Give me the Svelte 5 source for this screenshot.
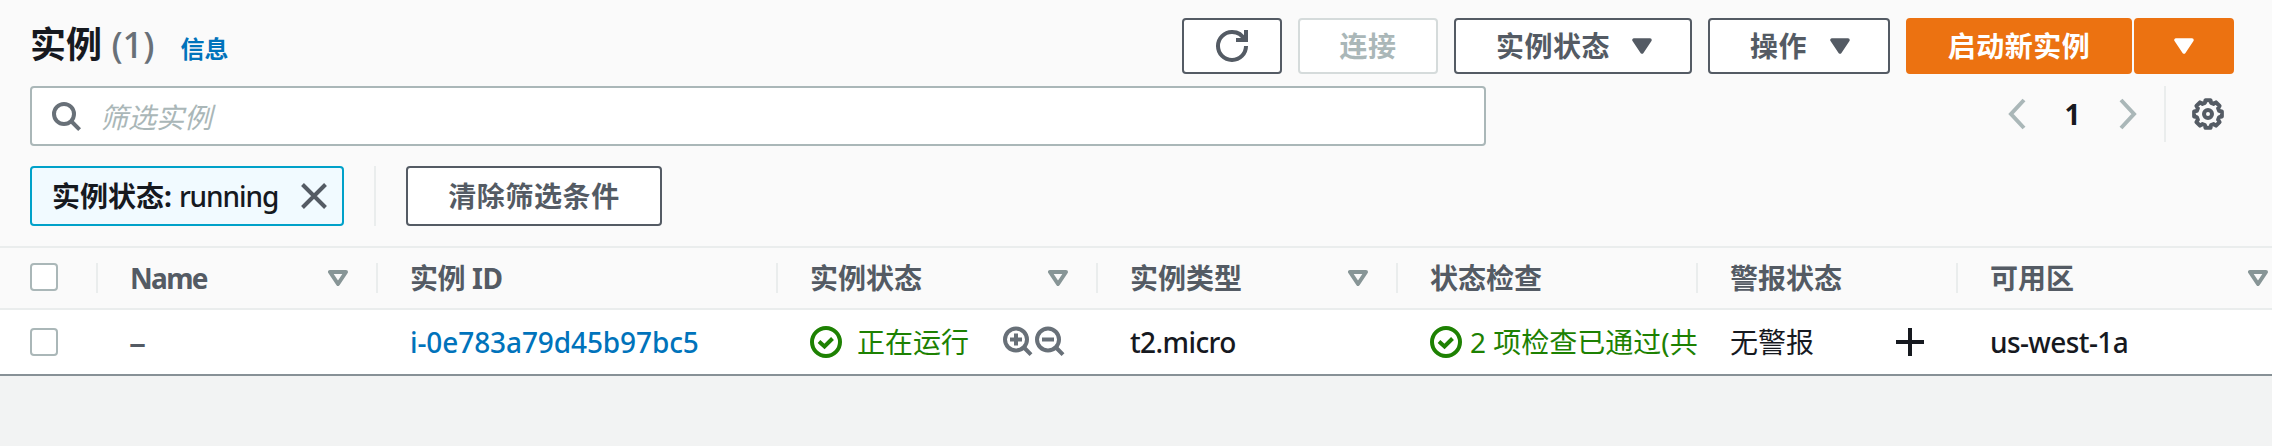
<script>
  const columns = [
    { label: 'Name', sortable: true },
    { label: '实例 ID', sortable: false },
    { label: '实例状态', sortable: true },
    { label: '实例类型', sortable: true },
    { label: '状态检查', sortable: false },
    { label: '警报状态', sortable: false },
    { label: '可用区', sortable: true }
  ];

  const points = [];
  for (let i = 0; i < 8; i++) {
    const mid = (i * 45 - 90) * Math.PI / 180;
    for (const [offset, r] of [[-0.27, 11.6], [-0.18, 14.1], [0.18, 14.1], [0.27, 11.6]]) {
      points.push(`${(16 + r * Math.cos(mid + offset)).toFixed(2)},${(16 + r * Math.sin(mid + offset)).toFixed(2)}`);
    }
  }
  const gear = points.join(' ');
</script>

{#snippet caret()}
  <svg class="caret" width="20" height="16" viewBox="0 0 20 16"><path d="M2 2H18L10 14Z" fill="currentColor" stroke="currentColor" stroke-width="3.5" stroke-linejoin="round" /></svg>
{/snippet}

{#snippet ok()}
  <svg class="icon" width="32" height="32" viewBox="0 0 32 32"><circle cx="16" cy="16" r="14" /><path d="M9 15.5L14.5 20.5L22.5 12.5" /></svg>
{/snippet}

<section class="panel">
  <header class="top">
    <h2>实例 <span class="count">(1)</span></h2>
    <a class="info" href="#info">信息</a>
    <div class="actions">
      <button class="btn refresh" aria-label="刷新">
        <svg class="icon" width="32" height="32" viewBox="0 0 16 16"><g stroke-width="2"><path d="M10 5h5V0" /><path d="M15 8a6.957 6.957 0 0 1-7 7 6.957 6.957 0 0 1-7-7 6.957 6.957 0 0 1 7-7 6.87 6.87 0 0 1 6.3 4" /></g></svg>
      </button>
      <button class="btn connect" disabled>连接</button>
      <button class="btn menu"><span>实例状态</span>{@render caret()}</button>
      <button class="btn menu"><span>操作</span>{@render caret()}</button>
      <div class="split">
        <button class="btn primary launch">启动新实例</button>
        <button class="btn primary more" aria-label="更多">{@render caret()}</button>
      </div>
    </div>
  </header>

  <div class="tools">
    <label class="search">
      <svg class="icon" width="32" height="32" viewBox="0 0 32 32"><circle cx="14" cy="14" r="10" /><path d="M21 21L29.6 29.6" /></svg>
      <input placeholder="筛选实例" />
    </label>
    <nav class="pages">
      <svg class="icon arrow" width="20" height="32" viewBox="0 0 20 32"><path d="M17 2L4 16L17 30" /></svg>
      <b>1</b>
      <svg class="icon arrow" width="20" height="32" viewBox="0 0 20 32"><path d="M3 2L16 16L3 30" /></svg>
      <span class="rule"></span>
      <svg class="icon gear" width="32" height="32" viewBox="0 0 32 32"><polygon points={gear} stroke-linejoin="round" /><circle cx="16" cy="16" r="4" /></svg>
    </nav>
  </div>

  <div class="filters">
    <div class="token">
      <b>实例状态:</b><span>running</span>
      <svg class="icon" width="28" height="28" viewBox="0 0 28 28"><path d="M2.5 2.5L25.5 25.5M25.5 2.5L2.5 25.5" /></svg>
    </div>
    <span class="rule"></span>
    <button class="btn clear">清除筛选条件</button>
  </div>

  <div class="row head">
    <div class="select"><span class="check"></span></div>
    {#each columns as col, i}
      <div class="cell" class:latin={i === 0} class:mixed={i === 1}>
        <span>{col.label}</span>
        {#if col.sortable}
          <svg class="sort" width="20" height="16" viewBox="0 0 20 16"><path d="M2 2H18L10 14Z" /></svg>
        {/if}
      </div>
    {/each}
  </div>

  <div class="row body">
    <div class="select"><span class="check"></span></div>
    <div class="cell dash">–</div>
    <div class="cell id"><a href="#instance">i-0e783a79d45b97bc5</a></div>
    <div class="cell good">
      {@render ok()}<span class="state">正在运行</span>
      <span class="lenses">
        <svg class="icon" width="32" height="32" viewBox="0 0 32 32"><circle cx="15" cy="13.5" r="11" /><path d="M15 7.5V19.5M9 13.5H21M23 21.5L30 28.7" /></svg>
        <svg class="icon" width="32" height="32" viewBox="0 0 32 32"><circle cx="15" cy="13.5" r="11" /><path d="M9 13.5H21M23 21.5L30 28.7" /></svg>
      </span>
    </div>
    <div class="cell value">t2.micro</div>
    <div class="cell good clip">{@render ok()}<span class="passed">2 项检查已通过(共</span></div>
    <div class="cell">无警报
      <svg class="icon plus" width="28" height="28" viewBox="0 0 28 28"><path d="M14 0V28M0 14H28" /></svg>
    </div>
    <div class="cell value">us-west-1a</div>
  </div>
</section>

<style>
  :global(body) {
    background: #f2f3f3;
  }
  .panel {
    width: 2272px;
    height: 374px;
    background: #fafafa;
    border-bottom: 2px solid #879196;
    box-shadow: 0 1px 0 0 #b4bcbe, 0 2px 0 0 #d8dddd;
    color: #16191f;
    font: 28px/40px "Noto Sans", "Noto Sans CJK SC", sans-serif;
    white-space: nowrap;
  }
  button, input {
    font: inherit;
    padding: 0;
    margin: 0;
  }
  a {
    color: #0073bb;
    text-decoration: none;
  }
  svg {
    display: block;
    flex: none;
  }
  .icon {
    fill: none;
    stroke: currentColor;
    stroke-width: 4;
  }
  .top {
    height: 86px;
    box-sizing: border-box;
    padding: 18px 38px 0 30px;
    display: flex;
    align-items: flex-start;
  }
  h2 {
    margin: 5px 0 0;
    font-size: 36px;
    line-height: 44px;
  }
  .count {
    font-weight: 500;
    color: #687078;
  }
  .info {
    margin: 11px 0 0 26px;
    font-size: 24px;
    font-weight: 700;
  }
  .actions {
    margin-left: auto;
    display: flex;
    gap: 16px;
  }
  .btn {
    height: 56px;
    box-sizing: border-box;
    border: 2px solid #545b64;
    border-radius: 4px;
    background: #fff;
    color: #545b64;
    font-weight: 700;
    letter-spacing: 0.5px;
    display: flex;
    align-items: center;
    justify-content: center;
  }
  .refresh {
    width: 100px;
  }
  .connect {
    width: 140px;
    border-color: #d5dbdb;
    color: #aab7b8;
  }
  .menu {
    justify-content: space-between;
    width: 238px;
    padding: 0 38px 0 40px;
  }
  .menu + .menu {
    width: 182px;
  }
  .split {
    display: flex;
    gap: 2px;
  }
  .primary {
    background: #ec7211;
    border-color: #ec7211;
    color: #fff;
  }
  .launch {
    width: 226px;
  }
  .more {
    width: 100px;
  }
  .tools {
    display: flex;
    justify-content: space-between;
    height: 80px;
    padding: 0 48px 0 30px;
  }
  .search {
    width: 1456px;
    height: 60px;
    box-sizing: border-box;
    border: 2px solid #aab7b8;
    border-radius: 4px;
    background: #fff;
    color: #687078;
    display: flex;
    align-items: center;
    padding: 0 18px;
    gap: 18px;
  }
  .search input {
    flex: 1;
    border: 0;
    outline: 0;
    background: none;
    height: 40px;
    padding-top: 2px;
  }
  .search input::placeholder {
    color: #aab7b8;
    font-style: italic;
    opacity: 1;
  }
  .pages {
    display: flex;
    align-items: center;
    height: 56px;
  }
  .pages b {
    width: 91px;
    text-align: center;
  }
  .arrow {
    color: #aab7b8;
  }
  .rule {
    width: 2px;
    align-self: stretch;
    background: #eaeded;
  }
  .pages .rule {
    margin: 0 26px;
  }
  .gear {
    color: #545b64;
  }
  .filters {
    display: flex;
    height: 60px;
    gap: 30px;
    padding: 0 30px 20px;
  }
  .token {
    width: 314px;
    box-sizing: border-box;
    border: 2px solid #00a1c9;
    border-radius: 4px;
    background: #f1faff;
    display: flex;
    align-items: center;
    padding-left: 20px;
  }
  .token span {
    margin-left: 7px;
    font-weight: 500;
    letter-spacing: -1.1px;
  }
  .token svg {
    color: #545b64;
    margin: 0 14px 0 auto;
  }
  .clear {
    width: 256px;
    height: 60px;
    letter-spacing: 0.6px;
  }
  .row {
    display: grid;
    grid-template-columns: 98px 280px 400px 320px 300px 300px 260px 340px;
    align-items: center;
    width: 2272px;
    overflow: hidden;
  }
  .head {
    height: 60px;
    border-top: 2px solid #eaeded;
    border-bottom: 2px solid #eaeded;
    color: #545b64;
    font-weight: 700;
  }
  .body {
    height: 64px;
    background: #fff;
  }
  .select {
    padding-left: 30px;
  }
  .check {
    display: block;
    width: 28px;
    height: 28px;
    box-sizing: border-box;
    border: 2px solid #aab7b8;
    border-radius: 4px;
    background: #fff;
  }
  .cell {
    min-width: 0;
    padding-left: 32px;
    display: flex;
    align-items: center;
  }
  .head .select, .head .cell {
    height: 30px;
    border-right: 2px solid #eaeded;
  }
  .latin span {
    letter-spacing: -1.7px;
  }
  .mixed span {
    letter-spacing: -0.4px;
  }
  .sort {
    margin: 0 28px 0 auto;
    fill: none;
    stroke: #879596;
    stroke-width: 4;
    stroke-linejoin: round;
  }
  .dash {
    color: #545b64;
    font-size: 34px;
    padding-left: 31px;
    font-weight: 500;
  }
  .id {
    font-weight: 500;
    letter-spacing: -0.1px;
  }
  .value {
    font-weight: 500;
    letter-spacing: -0.6px;
  }
  .good {
    color: #1d8102;
  }
  .state {
    margin-left: 15px;
  }
  .lenses {
    display: flex;
    margin-left: 32px;
    color: #687078;
  }
  .clip {
    overflow: hidden;
  }
  .passed {
    margin-left: 8px;
  }
  .plus {
    margin: 0 34px 0 auto;
  }
</style>
